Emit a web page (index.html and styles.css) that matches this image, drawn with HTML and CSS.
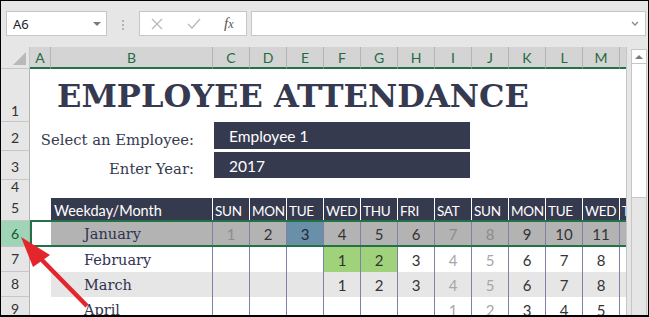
FILE: index.html
```html
<!DOCTYPE html>
<html>
<head>
    <meta charset="utf-8">
    <title>Employee Attendance</title>
    <link rel="stylesheet" href="styles.css">
</head>
<body>
<div class="app">
    <div class="formula-bar">
        <div class="name-box">A6<span class="caret"></span></div>
        <div class="grip"></div>
        <div class="fx-box">
            <svg class="ico cancel" width="12" height="12" viewBox="0 0 12 12"><path d="M1 1L11 11M11 1L1 11"/></svg>
            <svg class="ico enter" width="14" height="12" viewBox="0 0 14 12"><path d="M1 6L5 10L13 1"/></svg>
            <span class="fx">f<span class="fx-x">x</span></span>
        </div>
        <div class="formula-input">
            <svg class="chev" width="8" height="5" viewBox="0 0 8 5"><path d="M1 1L4 4L7 1"/></svg>
        </div>
    </div>

    <div class="workspace">
        <div class="sheet">
            <div class="row heads">
                <div class="corner"><span class="tri"></span></div>
                <div class="ch">A</div><div class="ch">B</div><div class="ch">C</div><div class="ch">D</div>
                <div class="ch">E</div><div class="ch">F</div><div class="ch">G</div><div class="ch">H</div>
                <div class="ch">I</div><div class="ch">J</div><div class="ch">K</div><div class="ch">L</div>
                <div class="ch">M</div><div class="ch"></div>
            </div>

            <div class="row r1">
                <div class="rh">1</div><div></div>
                <div class="title">EMPLOYEE ATTENDANCE</div>
            </div>

            <div class="row r2">
                <div class="rh">2</div><div></div>
                <div class="label">Select an Employee:</div>
                <div class="field">Employee 1</div>
            </div>

            <div class="row r3">
                <div class="rh">3</div><div></div>
                <div class="label">Enter Year:</div>
                <div class="field">2017</div>
            </div>

            <div class="row r4">
                <div class="rh">4</div><div></div>
                <div class="table-top"></div>
            </div>

            <div class="row r5">
                <div class="rh">5</div><div></div>
                <div class="th first">Weekday/Month</div>
                <div class="th">SUN</div><div class="th">MON</div><div class="th">TUE</div><div class="th">WED</div>
                <div class="th">THU</div><div class="th">FRI</div><div class="th">SAT</div><div class="th">SUN</div>
                <div class="th">MON</div><div class="th">TUE</div><div class="th">WED</div><div class="th">T</div>
            </div>

            <div class="row r6 month selected">
                <div class="rh">6</div><div></div>
                <div class="mn">January</div>
                <div class="d we">1</div><div class="d">2</div><div class="d blue">3</div><div class="d">4</div>
                <div class="d">5</div><div class="d">6</div><div class="d we">7</div><div class="d we">8</div>
                <div class="d">9</div><div class="d">10</div><div class="d">11</div><div class="d"></div>
            </div>

            <div class="row r7 month">
                <div class="rh">7</div><div></div>
                <div class="mn">February</div>
                <div class="d"></div><div class="d"></div><div class="d"></div><div class="d green">1</div>
                <div class="d green">2</div><div class="d">3</div><div class="d we">4</div><div class="d we">5</div>
                <div class="d">6</div><div class="d">7</div><div class="d">8</div><div class="d"></div>
            </div>

            <div class="row r8 month alt">
                <div class="rh">8</div><div></div>
                <div class="mn">March</div>
                <div class="d"></div><div class="d"></div><div class="d"></div><div class="d">1</div>
                <div class="d">2</div><div class="d">3</div><div class="d we">4</div><div class="d we">5</div>
                <div class="d">6</div><div class="d">7</div><div class="d">8</div><div class="d"></div>
            </div>

            <div class="row r9 month">
                <div class="rh">9</div><div></div>
                <div class="mn">April</div>
                <div class="d"></div><div class="d"></div><div class="d"></div><div class="d"></div>
                <div class="d"></div><div class="d"></div><div class="d we">1</div><div class="d we">2</div>
                <div class="d">3</div><div class="d">4</div><div class="d">5</div><div class="d"></div>
            </div>
        </div>

        <div class="vscroll">
            <div class="up"><span class="up-tri"></span></div>
            <div class="thumb"></div>
            <div class="track"></div>
        </div>
    </div>

    <svg class="arrow" width="649" height="317" viewBox="0 0 649 317">
        <line x1="41" y1="259" x2="87" y2="306"/>
        <polygon points="21,237 50,255 33,267"/>
    </svg>
</div>
</body>
</html>
```

FILE: styles.css
```css
* {
    box-sizing: border-box;
}

body {
    margin: 0;
}

.app {
    position: relative;
    width: 649px;
    height: 317px;
    border: 1px solid #000;
    border-bottom-width: 2px;
    background: #e6e6e6;
    overflow: hidden;
    font-family: Lato, sans-serif;
    color: #333;
}

/* formula bar */
.formula-bar {
    display: flex;
    align-items: flex-start;
    height: 46px;
    padding: 10px 0 0 5px;
}

.name-box {
    display: flex;
    align-items: center;
    justify-content: space-between;
    width: 101px;
    height: 25px;
    padding: 0 5px 0 6px;
    background: #fff;
    border: 1px solid #c6c6c6;
    font-family: "Noto Sans", sans-serif;
    font-size: 13px;
    color: #222;
}

.caret {
    width: 0;
    height: 0;
    border-left: 4px solid transparent;
    border-right: 4px solid transparent;
    border-top: 4px solid #7a7a7a;
}

.grip {
    width: 2px;
    height: 2px;
    margin: 9px 0 0 15px;
    background: #b4b4b4;
    box-shadow: 0 4px #b4b4b4, 0 8px #b4b4b4;
}

.fx-box {
    display: flex;
    align-items: center;
    width: 108px;
    height: 25px;
    margin-left: 15px;
    padding-left: 11px;
    background: #fff;
    border: 1px solid #c6c6c6;
}

.ico path {
    fill: none;
    stroke: #b8b8b8;
    stroke-width: 1.3;
}

.enter {
    margin-left: 24px;
}

.fx {
    margin-left: 23px;
    font-family: "Liberation Serif", serif;
    font-style: italic;
    font-size: 15px;
    color: #555;
}

.fx-x {
    font-size: 12px;
}

.formula-input {
    flex: 1;
    display: flex;
    align-items: center;
    justify-content: flex-end;
    height: 25px;
    margin: 0 2px 0 4px;
    padding-right: 6px;
    background: #fff;
    border: 1px solid #c6c6c6;
}

.chev path {
    fill: none;
    stroke: #888;
    stroke-width: 1.3;
}

/* sheet */
.workspace {
    display: flex;
    height: 268px;
}

.sheet {
    width: 626px;
    overflow: hidden;
    background: #fff;
    border-right: 1px solid #c6c6c6;
}

.row {
    display: grid;
    grid-template-columns: 29px 21px 162px repeat(12, 37px);
}

.heads {
    height: 22px;
    background: #e6e6e6;
}

.corner {
    display: flex;
    align-items: flex-end;
    justify-content: flex-end;
    padding: 0 3px 3px 0;
    border-right: 1px solid #c6c6c6;
    border-bottom: 1px solid #c6c6c6;
}

.tri {
    width: 0;
    height: 0;
    border-left: 13px solid transparent;
    border-bottom: 13px solid #b9b9b9;
}

.ch {
    display: flex;
    align-items: center;
    justify-content: center;
    background: #d4d4d4;
    border-right: 1px solid #b4b4b4;
    border-bottom: 2px solid #217346;
    font-size: 14px;
    color: #1f6b43;
}

.rh {
    display: flex;
    align-items: flex-end;
    justify-content: center;
    padding-bottom: 5px;
    background: #e6e6e6;
    border-right: 1px solid #b4b4b4;
    border-bottom: 1px solid #c6c6c6;
    font-size: 14px;
    line-height: 1;
    color: #333;
}

.r1 { height: 53px; }
.r2, .r3 { height: 29px; }
.r4 { height: 18px; }
.r5 { height: 23px; }
.r6 { height: 26px; }
.r7, .r8, .r9 { height: 25px; }

.r1 .rh {
    padding-bottom: 3px;
}

.title {
    grid-column: 3 / -1;
    padding: 11px 0 0 6px;
    font-family: "DejaVu Serif", serif;
    font-weight: bold;
    font-size: 32px;
    line-height: 1;
    white-space: nowrap;
    color: #363a50;
}

.label {
    display: flex;
    justify-content: flex-end;
    align-self: center;
    padding: 7px 19px 0 0;
    font-family: "DejaVu Serif", serif;
    font-size: 14.8px;
    line-height: 1;
    white-space: nowrap;
    color: #363a4f;
}

.field {
    grid-column: 4 / 11;
    display: flex;
    align-items: center;
    margin: 0 2px 2px 1px;
    padding: 1px 0 0 15px;
    background: #363a4f;
    font-size: 15.5px;
    color: #fff;
}

.r3 .field {
    margin: 1px 2px 2px 1px;
}

.table-top {
    grid-column: 3 / -1;
    border-bottom: 1px solid #bdbdbd;
}

.th {
    display: flex;
    align-items: center;
    padding: 2px 0 0 2px;
    background: #363a4f;
    border-right: 1px solid #fff;
    font-size: 13.5px;
    letter-spacing: -0.3px;
    white-space: nowrap;
    overflow: hidden;
    color: #fff;
}

.th.first {
    padding-left: 3px;
    font-size: 14.5px;
    letter-spacing: 0;
}

.month {
    position: relative;
}

.mn {
    display: flex;
    align-items: center;
    padding-left: 33px;
    border-right: 1px solid #7e80a8;
    font-family: "DejaVu Serif", serif;
    font-size: 14.5px;
    color: #2f3350;
}

.d {
    display: flex;
    align-items: center;
    justify-content: center;
    border-right: 1px solid #7e80a8;
    font-size: 15px;
    color: #333;
}

.d.we {
    color: #a6a6a6;
}

.r6 .mn, .r6 .d {
    background: #b3b3b3;
}

.r6 .d.we {
    color: #8c8c8c;
}

.alt .mn, .alt .d {
    background: #e6e6e6;
}

.d.blue {
    background: #6a8fa8 !important;
    color: #1e2a36;
}

.d.green {
    background: #a0d27b;
}

.selected .rh {
    background: #9fd5b6;
    color: #0e5c30;
}

.selected::after {
    content: "";
    position: absolute;
    top: -1px;
    bottom: 0;
    left: 29px;
    right: -40px;
    border: 2px solid #217346;
}

/* vertical scrollbar */
.vscroll {
    display: flex;
    flex-direction: column;
    width: 16px;
    margin-left: 4px;
    padding-top: 2px;
}

.up {
    display: flex;
    align-items: center;
    justify-content: center;
    height: 15px;
    background: #fff;
    border: 1px solid #c6c6c6;
}

.up-tri {
    width: 0;
    height: 0;
    border-left: 4px solid transparent;
    border-right: 4px solid transparent;
    border-bottom: 4px solid #7a7a7a;
}

.thumb {
    height: 134px;
    background: #fff;
    border: 1px solid #c6c6c6;
    border-top: none;
}

.track {
    flex: 1;
    border-left: 1px solid #c6c6c6;
    border-right: 1px solid #c6c6c6;
}

/* callout arrow */
.arrow {
    position: absolute;
    top: -1px;
    left: -1px;
    pointer-events: none;
}

.arrow line {
    stroke: #e3262b;
    stroke-width: 4.5;
}

.arrow polygon {
    fill: #e3262b;
}
```
